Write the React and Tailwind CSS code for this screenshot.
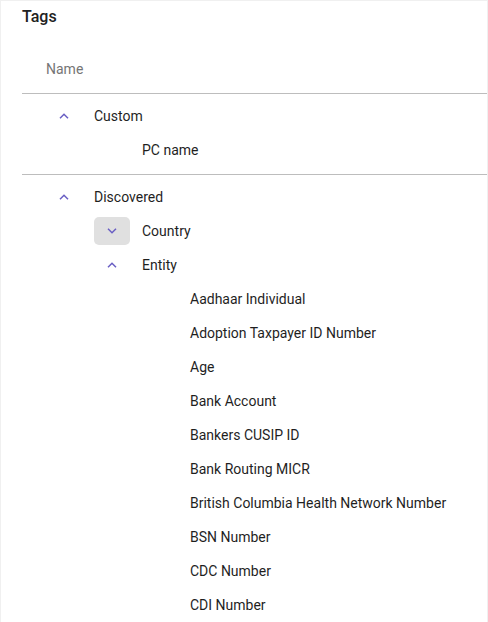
import React from 'react';

const tree = [
  {
    name: 'Custom',
    open: true,
    children: [{ name: 'PC name' }],
  },
  {
    name: 'Discovered',
    open: true,
    children: [
      { name: 'Country', open: false, focused: true, children: [] },
      {
        name: 'Entity',
        open: true,
        children: [
          'Aadhaar Individual',
          'Adoption Taxpayer ID Number',
          'Age',
          'Bank Account',
          'Bankers CUSIP ID',
          'Bank Routing MICR',
          'British Columbia Health Network Number',
          'BSN Number',
          'CDC Number',
          'CDI Number',
        ].map((name) => ({ name })),
      },
    ],
  },
];

const Chevron = ({ open }) => (
  <svg width="10" height="6" viewBox="0 0 10 6" fill="none">
    <polyline
      points={open ? '1,5.2 5,1.2 9,5.2' : '1,0.8 5,4.8 9,0.8'}
      stroke="#6a5fc4"
      strokeWidth="1.5"
    />
  </svg>
);

const Node = ({ node, level }) => {
  const hasKids = Array.isArray(node.children);
  return (
    <>
      <div className="flex h-[34px] items-center" style={{ paddingLeft: 24 + level * 48 }}>
        {hasKids ? (
          <button
            className={`mr-[12px] flex h-[28px] w-[36px] items-center justify-center rounded-[5px] ${
              node.focused ? 'bg-[#e0e0e0]' : ''
            }`}
          >
            <Chevron open={node.open} />
          </button>
        ) : (
          <span className="mr-[12px] w-[36px]" />
        )}
        <span className="text-[14px] text-[#1f1f1f]">{node.name}</span>
      </div>
      {hasKids && node.open && node.children.map((c) => <Node key={c.name} node={c} level={level + 1} />)}
    </>
  );
};

export default function App() {
  return (
    <div
      className="h-[622px] w-[488px] overflow-hidden border-x border-t border-[#f0f0f0] bg-white pl-[21px]"
      style={{ fontFamily: 'Roboto, "Liberation Sans", sans-serif' }}
    >
      <h2 className="pt-[4px] text-[16px] font-medium leading-[24px] text-[#212121]">Tags</h2>
      <div className="mt-[17px] flex h-[48px] items-center border-b border-[#bdbdbd] pl-[24px] text-[14px] text-[#757575]">
        Name
      </div>
      {tree.map((group) => (
        <div key={group.name} className="border-b border-[#bdbdbd] pt-[5px] pb-[7px]">
          <Node node={group} level={0} />
        </div>
      ))}
    </div>
  );
}
